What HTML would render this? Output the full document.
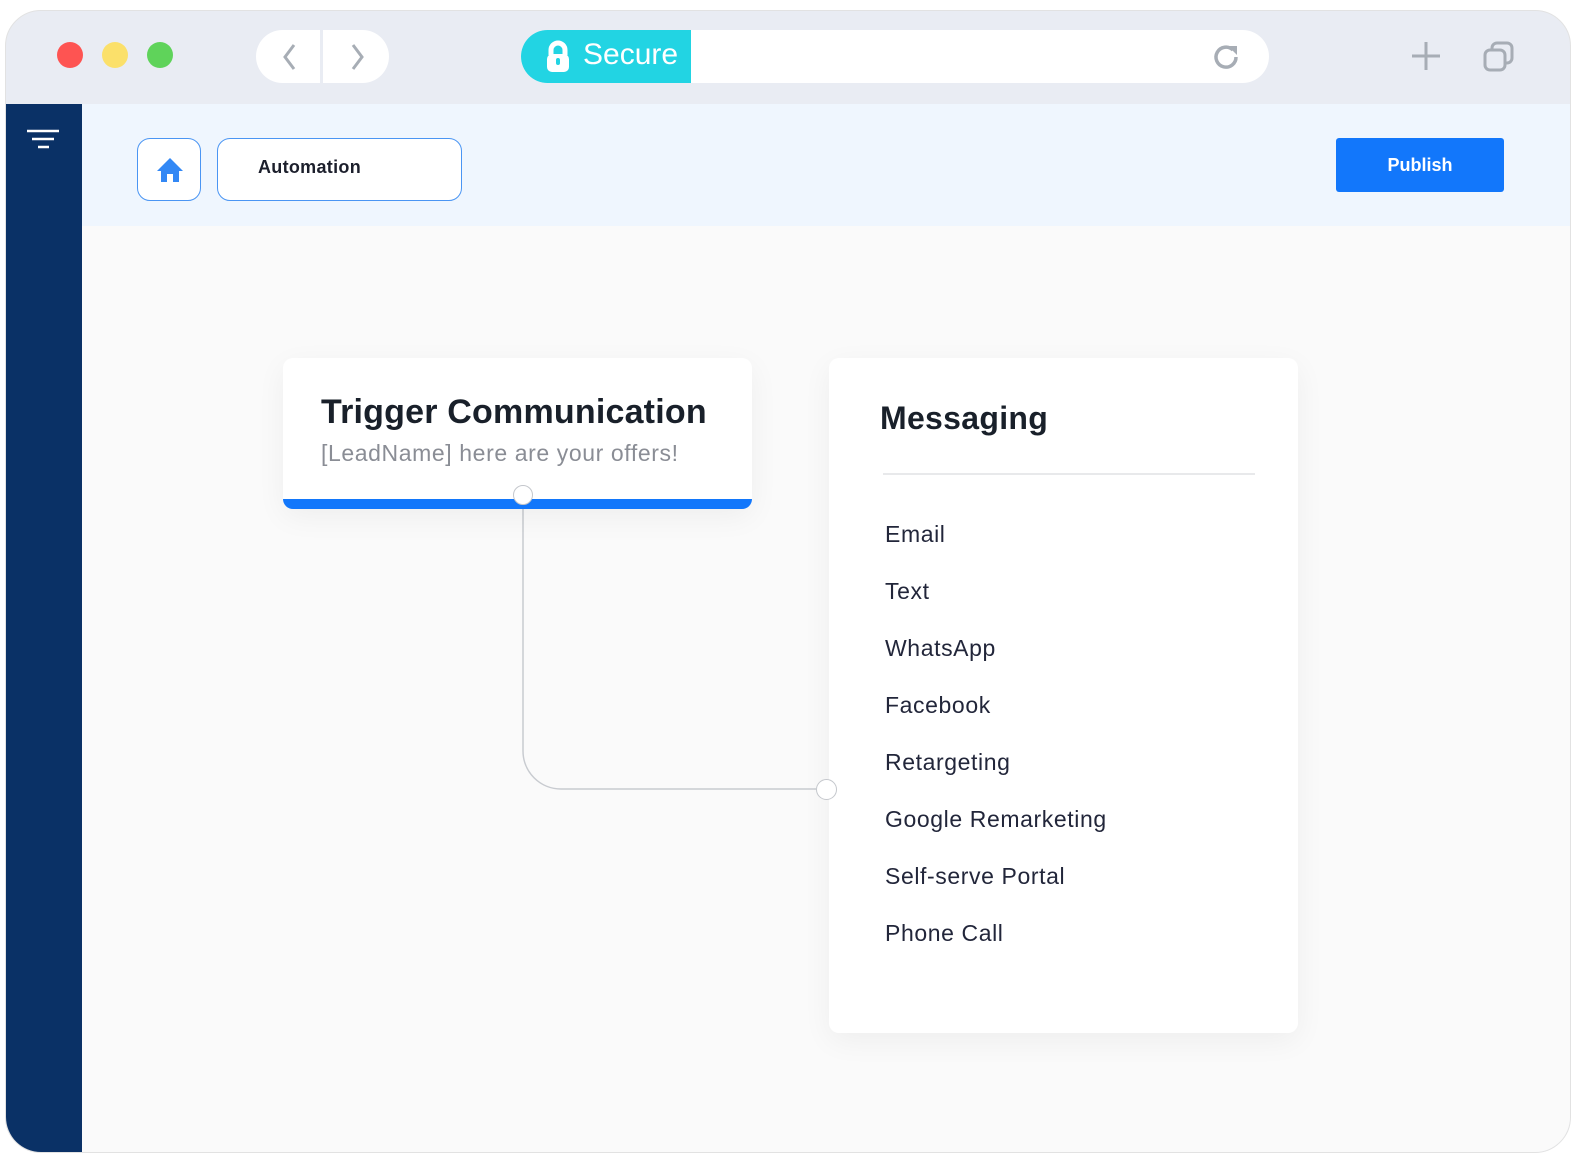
<!DOCTYPE html>
<html><head><meta charset="utf-8"><style>
*{margin:0;padding:0;box-sizing:border-box}
body{width:1580px;height:1164px;background:#fff;position:relative;overflow:hidden;font-family:"Liberation Sans",sans-serif}
.win{position:absolute;left:5px;top:10px;width:1566px;height:1143px;border-radius:36px;background:#e9ecf3;overflow:hidden;border:1px solid #e2e2e2}
.abs{position:absolute}
.dot{position:absolute;width:26px;height:26px;border-radius:50%;top:31px}
</style></head><body>
<div class="win">
  <div class="dot" style="left:51px;background:#fe5452"></div>
  <div class="dot" style="left:96px;background:#fbe06a"></div>
  <div class="dot" style="left:141px;background:#5fd35a"></div>
  <div class="abs" style="left:250px;top:19px;width:64px;height:53px;background:#fff;border-radius:27px 0 0 27px"></div>
  <div class="abs" style="left:317px;top:19px;width:66px;height:53px;background:#fff;border-radius:0 27px 27px 0"></div>
  <svg class="abs" style="left:250px;top:19px" width="133" height="53"><path d="M38 15 L29 27 L38 39" stroke="#a7adb5" stroke-width="3" fill="none"/><path d="M97 15 L106 27 L97 39" stroke="#a7adb5" stroke-width="3" fill="none"/></svg>
  <div class="abs" style="left:515px;top:19px;width:748px;height:53px;background:#fff;border-radius:27px"></div>
  <div class="abs" style="left:515px;top:19px;width:170px;height:53px;background:#22d4e3;border-radius:27px 0 0 27px"></div>
  <svg class="abs" style="left:537px;top:28px" width="30" height="36"><path d="M8 16 V11 a7 7 0 0 1 14 0 V16" stroke="#fff" stroke-width="5" fill="none"/><rect x="4" y="15" width="22" height="18" rx="5" fill="#fff"/><rect x="13" y="19" width="4" height="7" rx="2" fill="#22d4e3"/></svg>
  <div class="abs" style="left:577px;top:27px;color:#fff;font-size:30px">Secure</div>
  <svg class="abs" style="left:1205px;top:30px" width="32" height="32"><path d="M25 16 a10 10 0 1 1 -3 -7" stroke="#a7adb5" stroke-width="3.5" fill="none"/><path d="M17 5 L26 5 L26 14 Z" fill="#a7adb5"/></svg>
  <svg class="abs" style="left:1402px;top:27px" width="36" height="36"><path d="M18 4 V32 M4 18 H32" stroke="#a7adb5" stroke-width="3"/></svg>
  <svg class="abs" style="left:1476px;top:29px" width="34" height="34"><rect x="10" y="3" width="20" height="20" rx="5" stroke="#a7adb5" stroke-width="3" fill="none"/><rect x="3" y="10" width="20" height="20" rx="5" stroke="#a7adb5" stroke-width="3" fill="#e9ecf3"/></svg>

  <div class="abs" style="left:0;top:93px;width:1566px;height:1050px;background:#fafafa"></div>
  <div class="abs" style="left:76px;top:93px;width:1490px;height:122px;background:#eff6fe"></div>
  <div class="abs" style="left:0;top:93px;width:76px;height:1050px;background:#0a3166"></div>
  <svg class="abs" style="left:20px;top:118px" width="36" height="24"><path d="M1 2 H33 M6 10 H28 M12 18 H23" stroke="#fff" stroke-width="2.5"/></svg>

  <div class="abs" style="left:131px;top:127px;width:64px;height:63px;background:#fff;border:1.5px solid #4a95f3;border-radius:13px"></div>
  <svg class="abs" style="left:149px;top:145px" width="30" height="28"><path d="M15 2 L28 15 H24 V26 H18 V18 H12 V26 H6 V15 H2 Z" fill="#3388f5"/></svg>
  <div class="abs" style="left:211px;top:127px;width:245px;height:63px;background:#fff;border:1.5px solid #4a95f3;border-radius:13px"></div>
  <div class="abs" style="left:252px;top:146px;font-size:18px;color:#1c1f2c;font-weight:bold;letter-spacing:0.3px">Automation</div>
  <div class="abs" style="left:1330px;top:127px;width:168px;height:54px;background:#1277fb;border-radius:3px;color:#fff;font-size:18px;font-weight:bold;text-align:center;line-height:54px">Publish</div>

  <svg class="abs" style="left:0;top:0" width="1566" height="1143"><path d="M517 484 V740 a38 38 0 0 0 38 38 H810" stroke="#c8cbd0" stroke-width="1.5" fill="none"/></svg>

  <div class="abs" style="left:277px;top:347px;width:469px;height:151px;background:#fff;border-radius:10px;overflow:hidden;box-shadow:0 8px 30px rgba(0,0,0,0.05)">
    <div class="abs" style="left:0;bottom:0;width:100%;height:10px;background:#1277fb"></div>
    <div class="abs" style="left:38px;top:35px;font-size:34px;font-weight:bold;color:#19202a;letter-spacing:0.2px">Trigger Communication</div>
    <div class="abs" style="left:38px;top:82px;font-size:23px;color:#8a8d95;letter-spacing:0.6px">[LeadName] here are your offers!</div>
  </div>
  <div class="abs" style="left:507px;top:474px;width:20px;height:20px;border-radius:50%;background:#fff;border:1.5px solid #c4c7cc"></div>

  <div class="abs" style="left:823px;top:347px;width:469px;height:675px;background:#fff;border-radius:10px;box-shadow:0 8px 30px rgba(0,0,0,0.05)">
    <div class="abs" style="left:51px;top:42px;font-size:32px;font-weight:bold;color:#19202a;letter-spacing:0.3px">Messaging</div>
    <div class="abs" style="left:54px;top:115px;width:372px;height:2px;background:#e8e9eb"></div>
    <div class="abs" style="left:56px;top:148px;font-size:23px;line-height:57px;color:#22263a;letter-spacing:0.6px">Email<br>Text<br>WhatsApp<br>Facebook<br>Retargeting<br>Google Remarketing<br>Self-serve Portal<br>Phone Call</div>
  </div>
  <div class="abs" style="left:810px;top:768px;width:21px;height:21px;border-radius:50%;background:#fff;border:1.5px solid #c4c7cc"></div>
</div>
</body></html>
